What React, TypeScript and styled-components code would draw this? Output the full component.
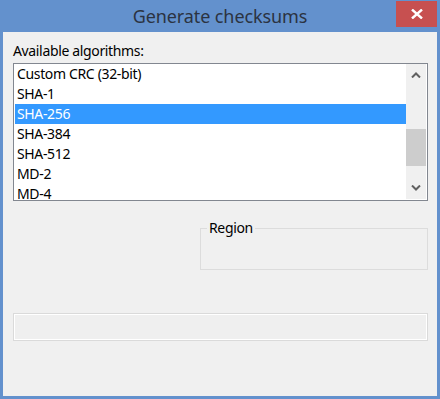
import styled, { createGlobalStyle } from 'styled-components'

const Global = createGlobalStyle`
  html, body {
    margin: 0;
    padding: 0;
    background: #6391cd;
  }
  * {
    box-sizing: border-box;
  }
`

const Frame = styled.div`
  width: 440px;
  height: 399px;
  background: #6391cd;
  display: flex;
  flex-direction: column;
  padding: 0 3px 3px 3px;
  font-family: 'Noto Sans', 'Open Sans', sans-serif;
`

const TitleBar = styled.div`
  height: 32px;
  display: grid;
  grid-template-columns: 1fr auto 1fr;
  align-items: start;
`

const Title = styled.div`
  grid-column: 2;
  font-size: 18px;
  line-height: 32px;
  letter-spacing: -0.1px;
  color: #2b3341;
  white-space: nowrap;
`

const CloseBtn = styled.div`
  grid-column: 3;
  justify-self: end;
  margin-top: 1px;
  width: 41px;
  height: 26px;
  background: #c75050;
  display: flex;
  align-items: center;
  justify-content: center;
`

const Client = styled.div`
  flex: 1;
  background: #f0f0f0;
  padding: 9px 9px 0 10px;
  display: flex;
  flex-direction: column;
  font-size: 14px;
  letter-spacing: -0.35px;
  color: #000;
`

const Label = styled.div`
  line-height: 20px;
  margin-bottom: 2px;
`

const ListBox = styled.div`
  height: 138px;
  border: 1px solid #828790;
  background: #fff;
  padding: 0 1px 1px 1px;
  display: flex;
`

const Items = styled.div`
  flex: 1;
  overflow: hidden;
`

const Item = styled.div<{ $selected?: boolean }>`
  height: 20px;
  line-height: 20px;
  padding-left: 2px;
  white-space: nowrap;
  background: ${p => (p.$selected ? '#3399ff' : 'transparent')};
  color: ${p => (p.$selected ? '#fff' : '#000')};
`

const ScrollBar = styled.div`
  width: 20px;
  background: #f0f0f0;
  display: flex;
  flex-direction: column;
`

const ArrowBtn = styled.div`
  height: 22px;
  display: flex;
  align-items: center;
  justify-content: center;
`

const Track = styled.div`
  flex: 1;
  padding-top: 43px;
`

const Thumb = styled.div`
  height: 37px;
  background: #cdcdcd;
`

const GroupRow = styled.div`
  display: flex;
  justify-content: flex-end;
  margin-top: 17px;
`

const Group = styled.fieldset`
  width: 228px;
  height: 52px;
  margin: 0;
  padding: 0;
  border: 1px solid #dcdcdc;
`

const Legend = styled.legend`
  margin-left: 6px;
  padding: 0 2px;
  line-height: 20px;
  font-size: 14px;
  color: #000;
`

const Progress = styled.div`
  margin-top: 43px;
  height: 28px;
  border: 1px solid #dadada;
  background: #efefef;
  box-shadow: inset 0 0 0 1px #ffffff;
`

const algorithms = ['Custom CRC (32-bit)', 'SHA-1', 'SHA-256', 'SHA-384', 'SHA-512', 'MD-2', 'MD-4']

const Chevron = ({ up }: { up?: boolean }) => (
  <svg width="10" height="6" viewBox="0 0 10 6">
    <path
      d={up ? 'M1 5.5 L5 1.5 L9 5.5' : 'M1 0.5 L5 4.5 L9 0.5'}
      fill="none"
      stroke="#606060"
      strokeWidth="2"
    />
  </svg>
)

export default function App() {
  return (
    <Frame>
      <Global />
      <TitleBar>
        <Title>Generate checksums</Title>
        <CloseBtn>
          <svg width="12" height="10" viewBox="0 0 12 10">
            <path d="M1 0.5 L11 9.5 M11 0.5 L1 9.5" stroke="#fff" strokeWidth="2.4" />
          </svg>
        </CloseBtn>
      </TitleBar>
      <Client>
        <Label>Available algorithms:</Label>
        <ListBox>
          <Items>
            {algorithms.map(a => (
              <Item key={a} $selected={a === 'SHA-256'}>
                {a}
              </Item>
            ))}
          </Items>
          <ScrollBar>
            <ArrowBtn>
              <Chevron up />
            </ArrowBtn>
            <Track>
              <Thumb />
            </Track>
            <ArrowBtn>
              <Chevron />
            </ArrowBtn>
          </ScrollBar>
        </ListBox>
        <GroupRow>
          <Group>
            <Legend>Region</Legend>
          </Group>
        </GroupRow>
        <Progress />
      </Client>
    </Frame>
  )
}
